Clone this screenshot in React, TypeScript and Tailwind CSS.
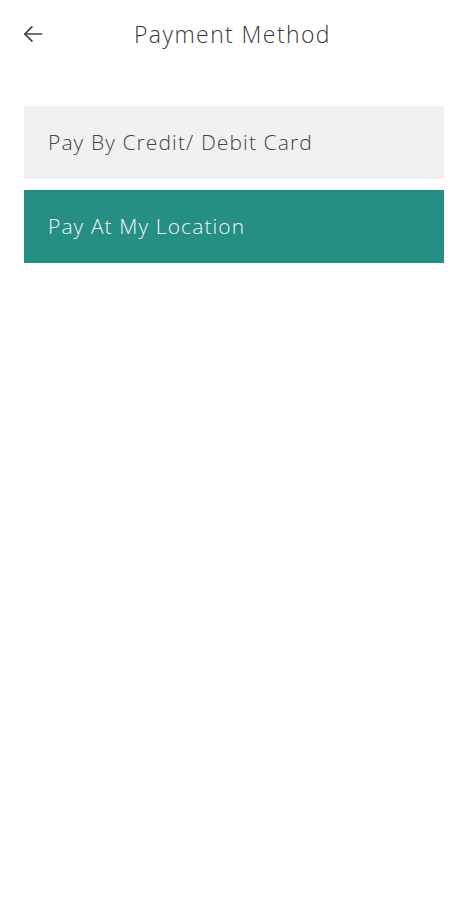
import React from 'react';

const App: React.FC = () => {
  return (
    <div className="min-h-[900px] w-[468px] bg-white" style={{ fontFamily: '"Open Sans", Lato, sans-serif' }}>
      <header className="flex h-[68px] items-center px-[20px]">
        <button className="flex h-[26px] w-[26px] items-center justify-center text-[#444]">
          <svg width="26" height="26" viewBox="0 0 24 24" fill="none" stroke="currentColor" strokeWidth="1.6" strokeLinecap="round" strokeLinejoin="round">
            <path d="M20 12H4.5" />
            <path d="M11 5.5 4.5 12l6.5 6.5" />
          </svg>
        </button>
        <h1 className="ml-[88px] text-[23px] font-light tracking-[1.4px] text-[#3a3a3a]">Payment Method</h1>
      </header>

      <div className="mt-[38px] flex flex-col gap-[11px] px-[24px]">
        <button className="flex h-[73px] items-center bg-[#f1f1f1] pl-[24px] text-left text-[21px] font-light tracking-[1.1px] text-[#444]">
          Pay By Credit/ Debit Card
        </button>
        <button className="flex h-[73px] items-center bg-[#268f84] pl-[24px] text-left text-[21px] font-light tracking-[1.1px] text-[#eef7f5]">
          Pay At My Location
        </button>
      </div>
    </div>
  );
};

export default App;
